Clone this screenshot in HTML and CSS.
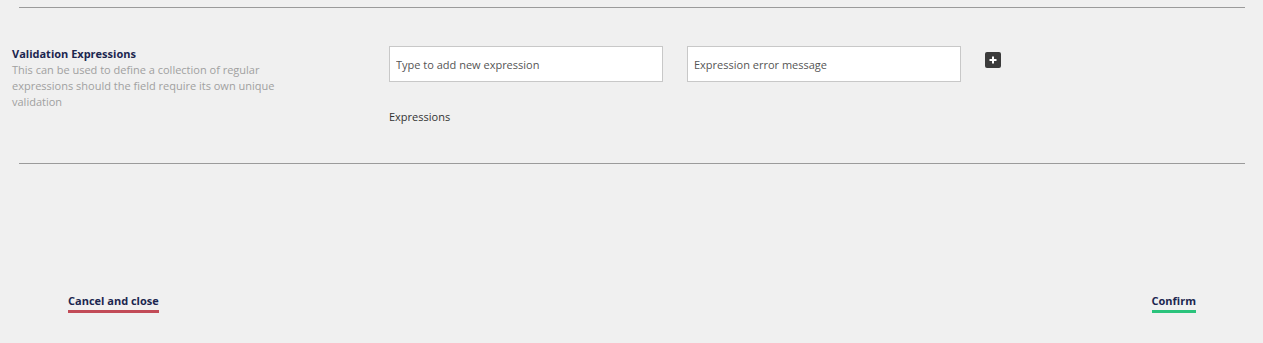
FILE: index.html
```html
<!DOCTYPE html>
<html lang="en">
<head>
    <meta charset="UTF-8">
    <title>Validation Expressions</title>
    <link rel="stylesheet" href="styles.css">
</head>
<body>
    <main class="panel">
        <section class="prop-row">
            <div class="prop-label">
                <h3>Validation Expressions</h3>
                <p>This can be used to define a collection of regular expressions should the field require its own unique validation</p>
            </div>
            <div class="prop-editor">
                <div class="add-row">
                    <input type="text" class="field" placeholder="Type to add new expression">
                    <input type="text" class="field" placeholder="Expression error message">
                    <button class="add-btn" title="Add">
                        <svg width="8" height="8" viewBox="0 0 8 8"><path d="M4 0.5v7M0.5 4h7" stroke="#fff" stroke-width="2"/></svg>
                    </button>
                </div>
                <div class="list-title">Expressions</div>
            </div>
        </section>
    </main>

    <footer class="actions">
        <a href="#" class="action cancel">Cancel and close</a>
        <a href="#" class="action confirm">Confirm</a>
    </footer>
</body>
</html>
```

FILE: styles.css
```css
body {
    font-family: "Open Sans", Lato, sans-serif;
    background-color: #f0f0f0;
    margin: 0;
    padding: 0;
    color: #1b264f;
}

.panel {
    margin: 7px 18px 0 19px;
    border-top: 1px solid #9b9b9b;
    border-bottom: 1px solid #9b9b9b;
}

.prop-row {
    display: flex;
    margin-left: -7px;
    padding: 38px 0 38px 0;
}

.prop-label {
    width: 377px;
}

.prop-label h3 {
    margin: 0;
    font-size: 11px;
    font-weight: 700;
    line-height: 16px;
    color: #1b264f;
}

.prop-label p {
    margin: 0;
    width: 275px;
    font-size: 11px;
    line-height: 16px;
    color: #a0a0a0;
}

.add-row {
    display: flex;
    align-items: flex-start;
}

.field {
    box-sizing: border-box;
    width: 274px;
    height: 36px;
    margin-right: 24px;
    padding: 0 6px;
    border: 1px solid #c8c8c8;
    background: #fff;
    font-family: inherit;
    font-size: 11px;
    color: #333;
}

.field::placeholder {
    color: #555;
}

.add-btn {
    width: 16px;
    height: 16px;
    margin-top: 6px;
    padding: 0;
    border: none;
    border-radius: 2px;
    background-color: #3b3b3b;
    display: flex;
    align-items: center;
    justify-content: center;
    cursor: pointer;
}

.list-title {
    margin-top: 27px;
    font-size: 11px;
    line-height: 16px;
    color: #333;
}

.actions {
    display: flex;
    justify-content: space-between;
    padding: 129px 67px 0 68px;
}

.action {
    font-size: 11px;
    font-weight: 700;
    line-height: 16px;
    color: #1b264f;
    text-decoration: none;
    padding-bottom: 1px;
    border-bottom: 3px solid;
}

.cancel {
    border-color: #c24b57;
}

.confirm {
    border-color: #2bc37c;
}
```
